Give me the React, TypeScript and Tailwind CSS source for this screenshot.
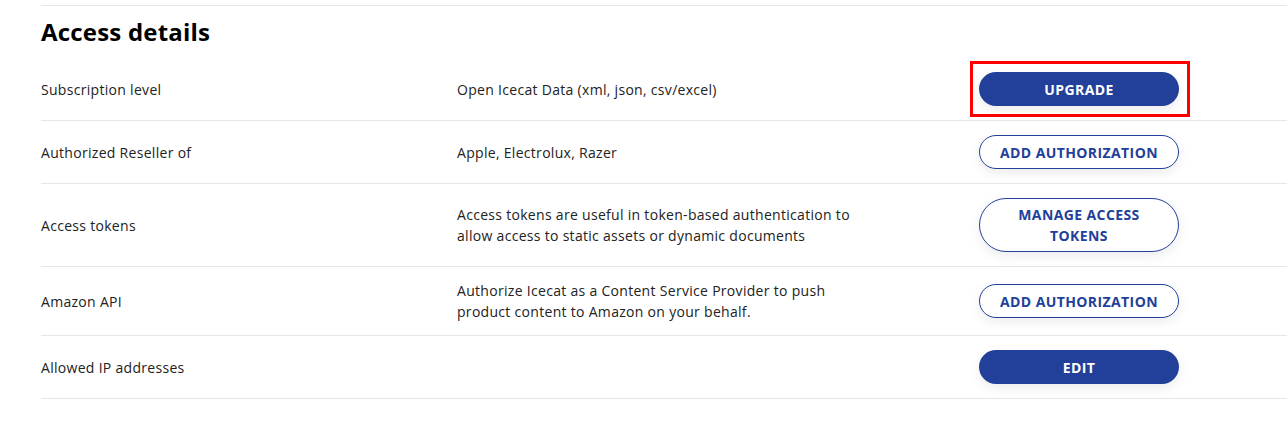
const rows = [
  {
    label: 'Subscription level',
    value: 'Open Icecat Data (xml, json, csv/excel)',
    action: 'Upgrade',
    primary: true,
    highlighted: true
  },
  {
    label: 'Authorized Reseller of',
    value: 'Apple, Electrolux, Razer',
    action: 'Add authorization'
  },
  {
    label: 'Access tokens',
    value: 'Access tokens are useful in token-based authentication to allow access to static assets or dynamic documents',
    action: 'Manage access tokens',
    narrow: true
  },
  {
    label: 'Amazon API',
    value: 'Authorize Icecat as a Content Service Provider to push product content to Amazon on your behalf.',
    action: 'Add authorization',
    tight: true
  },
  {
    label: 'Allowed IP addresses',
    value: '',
    action: 'Edit',
    primary: true
  }
]

type Row = (typeof rows)[number] & {
  primary?: boolean
  highlighted?: boolean
  narrow?: boolean
  tight?: boolean
}

function ActionButton({ row }: { row: Row }) {
  return (
    <div className="relative w-[200px]">
      {row.highlighted && (
        <span className="absolute -left-[9px] -right-[11px] -top-[11px] -bottom-[11px] border-[3px] border-[#ff0000] pointer-events-none" />
      )}
      <button
        type="button"
        className={
          row.primary
            ? 'w-full min-h-[34px] rounded-full bg-[#22409a] text-white text-[14px] tracking-[0.4px] font-bold uppercase leading-[21px] py-[6px] shadow-[0_4px_12px_rgba(0,0,0,0.08)]'
            : row.narrow
              ? 'w-full min-h-[34px] rounded-full border border-[#22409a] bg-white text-[#22409a] text-[14px] tracking-[0.4px] font-bold uppercase leading-[21px] py-[5px] px-[30px] shadow-[0_4px_12px_rgba(0,0,0,0.08)]'
              : 'w-full min-h-[34px] rounded-full border border-[#22409a] bg-white text-[#22409a] text-[14px] tracking-[0.4px] font-bold uppercase leading-[21px] py-[5px] shadow-[0_4px_12px_rgba(0,0,0,0.08)]'
        }
      >
        {row.action}
      </button>
    </div>
  )
}

export default function App() {
  return (
    <div className="min-h-[443px] bg-white pl-[41px] pr-[1px] pt-[5px] font-['Open_Sans',sans-serif] text-[#222]">
      <div className="border-t border-[#e6e6e6]">
        <h2 className="pt-[11px] pb-[11px] text-[24px] tracking-[0.2px] leading-[30px] font-bold text-black">
          Access details
        </h2>

        <div className="flex flex-col">
          {(rows as Row[]).map(row => (
            <div
              key={row.label}
              className={
                row.tight
                  ? 'flex items-center py-[13px] border-b border-[#e6e6e6] text-[14px] tracking-[0.3px] leading-[21px]'
                  : 'flex items-center py-[14px] border-b border-[#e6e6e6] text-[14px] tracking-[0.3px] leading-[21px]'
              }
            >
              <div className="w-[416px] shrink-0">{row.label}</div>
              <div className="w-[522px] shrink-0 pr-[110px]">{row.value}</div>
              <ActionButton row={row} />
            </div>
          ))}
        </div>
      </div>
    </div>
  )
}
